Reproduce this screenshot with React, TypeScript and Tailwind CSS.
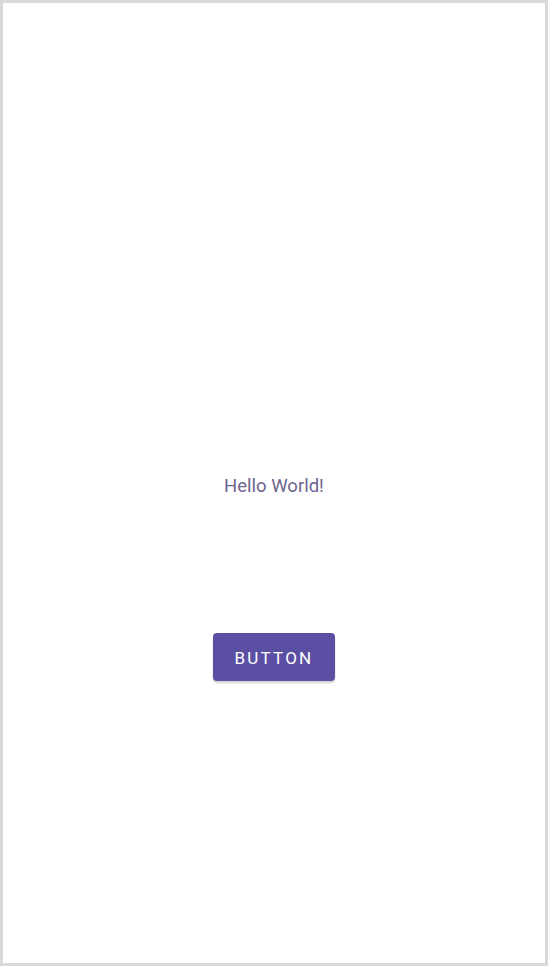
export default function App() {
  return (
    <div className="w-[548px] h-[966px] border-[3px] border-[#d9d9d9] bg-white flex flex-col items-center" style={{ fontFamily: "Roboto, 'Noto Sans', sans-serif" }}>
      <div className="mt-[470px] text-[18.5px] leading-[26px] text-[#6c6590]">Hello World!</div>
      <button className="mt-[134px] w-[122px] h-[48px] pt-[3px] rounded-[4px] bg-[#5b4fa3] text-white text-[17px] font-normal tracking-[0.13em] shadow-[0_2px_2px_rgba(0,0,0,0.18)]">
        BUTTON
      </button>
    </div>
  );
}
